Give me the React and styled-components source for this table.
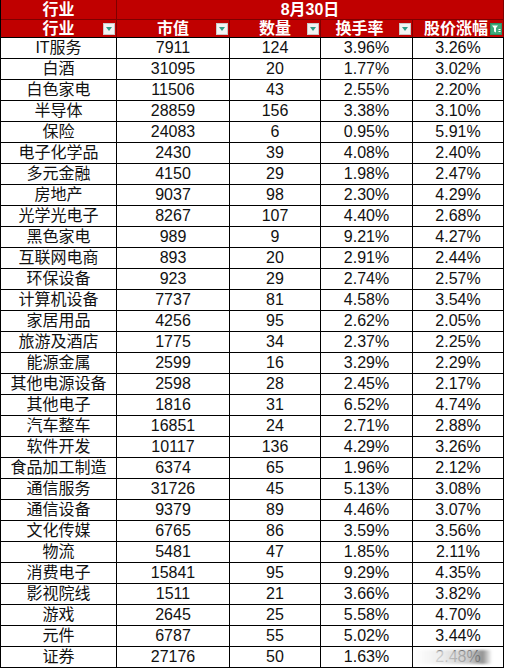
import React from "react";
import styled, { createGlobalStyle } from "styled-components";

const Global = createGlobalStyle`
  html, body { margin: 0; padding: 0; background: #ffffff; }
  body { font-family: "Liberation Sans", "Noto Sans CJK SC", Arial, sans-serif; }
`;

const COLS = "116px 113px 91px 92px 91px";

const Sheet = styled.div`
  position: relative;
  width: 504px;
  border-left: 1px solid #000;
  box-sizing: border-box;
`;

const HeaderRow = styled.div`
  display: grid;
  grid-template-columns: ${COLS};
  height: ${(p) => p.$h}px;
  background: #c00000;
  border-bottom: 1px solid ${(p) => p.$line};
  box-sizing: border-box;
`;

const HeadCell = styled.div`
  position: relative;
  grid-column: ${(p) => p.$span || "auto"};
  display: flex;
  align-items: center;
  justify-content: center;
  padding-right: ${(p) => p.$pad || 0}px;
  color: #ffffff;
  font-weight: 700;
  font-size: 16px;
  line-height: 1;
  border-right: 1px solid #7e0000;
  box-sizing: border-box;
  white-space: nowrap;
`;

const FilterBtn = styled.span`
  position: absolute;
  right: 1px;
  top: 50%;
  transform: translateY(-50%);
  width: 12px;
  height: 12px;
  box-sizing: border-box;
  background: ${(p) => (p.$active ? "#3ea97a" : "#f3f3f3")};
  border: 1px solid ${(p) => (p.$active ? "#2f8f63" : "#c9c9c9")};
  display: flex;
  align-items: center;
  justify-content: center;
`;

const DataRow = styled.div`
  display: grid;
  grid-template-columns: ${COLS};
  height: 21px;
  border-bottom: 1px solid #000;
  box-sizing: border-box;
`;

const Cell = styled.div`
  display: flex;
  align-items: center;
  justify-content: center;
  font-size: 16px;
  color: #111;
  line-height: 1;
  border-right: 1px solid #000;
  box-sizing: border-box;
  white-space: nowrap;
  overflow: hidden;
`;

const Watermark = styled.div`
  position: absolute;
  right: 12px;
  bottom: 4px;
  width: 78px;
  height: 14px;
  background: linear-gradient(
    90deg,
    rgba(255, 255, 255, 0.9) 0%,
    rgba(235, 235, 235, 0.85) 35%,
    rgba(190, 190, 190, 0.8) 70%,
    rgba(120, 120, 120, 0.8) 88%,
    rgba(255, 255, 255, 0.4) 100%
  );
  filter: blur(1px);
`;

const Arrow = () => (
  <svg width="8" height="6" viewBox="0 0 8 6">
    <path d="M1 1 L7 1 L4 5 Z" fill="#2f9a86" />
  </svg>
);

const FilterIcon = () => (
  <svg width="10" height="10" viewBox="0 0 10 10">
    <path d="M1 1.5 H7 L5 4 V8.5 L3 7.5 V4 Z" fill="#ffffff" />
    <rect x="7.5" y="5" width="2" height="1" fill="#ffffff" />
    <rect x="7.5" y="7" width="2" height="1" fill="#ffffff" />
  </svg>
);

const rows = [
  ["IT服务", "7911", "124", "3.96%", "3.26%"],
  ["白酒", "31095", "20", "1.77%", "3.02%"],
  ["白色家电", "11506", "43", "2.55%", "2.20%"],
  ["半导体", "28859", "156", "3.38%", "3.10%"],
  ["保险", "24083", "6", "0.95%", "5.91%"],
  ["电子化学品", "2430", "39", "4.08%", "2.40%"],
  ["多元金融", "4150", "29", "1.98%", "2.47%"],
  ["房地产", "9037", "98", "2.30%", "4.29%"],
  ["光学光电子", "8267", "107", "4.40%", "2.68%"],
  ["黑色家电", "989", "9", "9.21%", "4.27%"],
  ["互联网电商", "893", "20", "2.91%", "2.44%"],
  ["环保设备", "923", "29", "2.74%", "2.57%"],
  ["计算机设备", "7737", "81", "4.58%", "3.54%"],
  ["家居用品", "4256", "95", "2.62%", "2.05%"],
  ["旅游及酒店", "1775", "34", "2.37%", "2.25%"],
  ["能源金属", "2599", "16", "3.29%", "2.29%"],
  ["其他电源设备", "2598", "28", "2.45%", "2.17%"],
  ["其他电子", "1816", "31", "6.52%", "4.74%"],
  ["汽车整车", "16851", "24", "2.71%", "2.88%"],
  ["软件开发", "10117", "136", "4.29%", "3.26%"],
  ["食品加工制造", "6374", "65", "1.96%", "2.12%"],
  ["通信服务", "31726", "45", "5.13%", "3.08%"],
  ["通信设备", "9379", "89", "4.46%", "3.07%"],
  ["文化传媒", "6765", "86", "3.59%", "3.56%"],
  ["物流", "5481", "47", "1.85%", "2.11%"],
  ["消费电子", "15841", "95", "9.29%", "4.35%"],
  ["影视院线", "1511", "21", "3.66%", "3.82%"],
  ["游戏", "2645", "25", "5.58%", "4.70%"],
  ["元件", "6787", "55", "5.02%", "3.44%"],
  ["证券", "27176", "50", "1.63%", "2.48%"],
];

const heads = ["行业", "市值", "数量", "换手率", "股价涨幅"];
const pads = [0, 0, 0, 14, 4];

export default function App() {
  return (
    <>
      <Global />
      <Sheet>
        <HeaderRow $h={20} $line="#7e0000">
          <HeadCell>行业</HeadCell>
          <HeadCell $span="2 / 6">8月30日</HeadCell>
        </HeaderRow>
        <HeaderRow $h={18} $line="#000">
          {heads.map((h, i) => (
            <HeadCell key={h} $pad={pads[i]}>
              {h}
              <FilterBtn $active={i === 4}>{i === 4 ? <FilterIcon /> : <Arrow />}</FilterBtn>
            </HeadCell>
          ))}
        </HeaderRow>
        {rows.map((r) => (
          <DataRow key={r[0]}>
            {r.map((v, i) => (
              <Cell key={i}>{v}</Cell>
            ))}
          </DataRow>
        ))}
        <Watermark />
      </Sheet>
    </>
  );
}
